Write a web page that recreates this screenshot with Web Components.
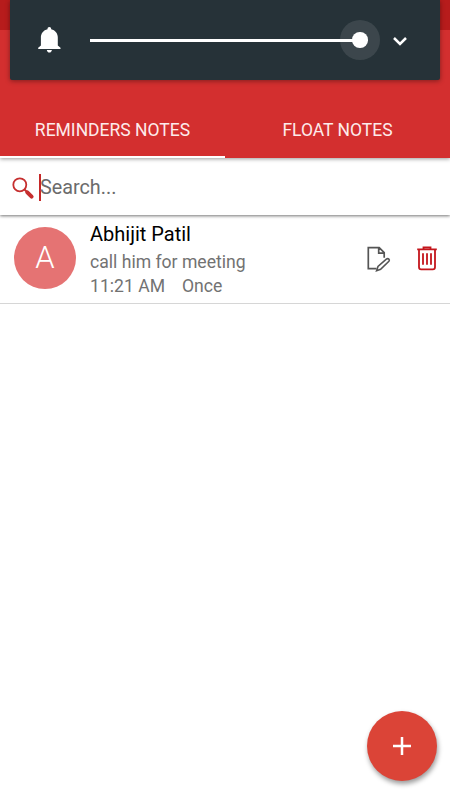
<!DOCTYPE html>
<html lang="en">
<head>
<meta charset="utf-8">
<meta name="viewport" content="width=device-width, initial-scale=1">
<title>Reminders Notes</title>
<style>
  html, body {
    margin: 0;
    height: 100%;
    overflow: hidden;
    background: #fff;
    font-family: Roboto, sans-serif;
  }
</style>
</head>
<body>
<notes-app>
  <volume-panel slot="overlay"></volume-panel>
  <app-header slot="header">
    <app-tab active>REMINDERS NOTES</app-tab>
    <app-tab>FLOAT NOTES</app-tab>
  </app-header>
  <search-bar>Search...</search-bar>
  <note-item>
    <span slot="initial">A</span>
    <span slot="title">Abhijit Patil</span>
    <span slot="text">call him for meeting</span>
    <span slot="time">11:21 AM</span>
    <span slot="repeat">Once</span>
  </note-item>
  <add-button slot="action"></add-button>
</notes-app>

<script>
class NotesApp extends HTMLElement {
  constructor() {
    super();
    this.attachShadow({ mode: "open" });
    this.shadowRoot.innerHTML = `
      <style>
        :host {
          display: flex;
          flex-direction: column;
          position: relative;
          height: 100vh;
          overflow: hidden;
          background: #fff;
        }
        main { flex: 1; }
        .overlay {
          position: absolute;
          top: 0;
          left: 10px;
          right: 10px;
          z-index: 5;
        }
        .action {
          position: absolute;
          right: 13px;
          bottom: 19px;
        }
      </style>
      <slot name="header"></slot>
      <main><slot></slot></main>
      <div class="overlay"><slot name="overlay"></slot></div>
      <div class="action"><slot name="action"></slot></div>
    `;
  }
}

class VolumePanel extends HTMLElement {
  constructor() {
    super();
    this.attachShadow({ mode: "open" });
    this.shadowRoot.innerHTML = `
      <style>
        :host {
          display: flex;
          align-items: center;
          height: 80px;
          box-sizing: border-box;
          padding: 0 30px 0 24px;
          background: #263238;
          border-radius: 0 0 2px 2px;
          box-shadow: 0 1px 5px rgba(0, 0, 0, 0.4);
        }
        svg { display: block; flex: none; }
        .slider {
          display: flex;
          align-items: center;
          flex: 1;
          margin: 0 10px 0 26px;
        }
        .track {
          flex: 1;
          height: 3px;
          background: #fff;
        }
        .thumb {
          display: grid;
          place-items: center;
          width: 40px;
          height: 40px;
          margin-left: -20px;
          border-radius: 50%;
          background: rgba(255, 255, 255, 0.1);
        }
        .thumb::before {
          content: "";
          width: 15.5px;
          height: 15.5px;
          border-radius: 50%;
          background: #fff;
        }
      </style>
      <svg width="30" height="30" viewBox="0 0 30 30" fill="#fff">
        <path d="M15.300 2c1.200 0 1.900.9 1.900 2.200 4 .9 6.600 4.200 6.600 8.300v7.900l2.700 2.300v1.400H4.200v-1.400l2.700-2.300v-7.900c0-4.100 2.600-7.400 6.600-8.300 0-1.300.7-2.200 1.800-2.200z"/>
        <path d="M12.800 25h5.100c-.1 1.500-1.200 2.600-2.500 2.600s-2.500-1.100-2.600-2.600z"/>
      </svg>
      <div class="slider"><div class="track"></div><div class="thumb"></div></div>
      <svg width="20" height="20" viewBox="0 0 20 20" fill="none" stroke="#fff" stroke-width="2.500">
        <path d="M4 8l6 6 6-6"/>
      </svg>
    `;
  }
}

class AppHeader extends HTMLElement {
  constructor() {
    super();
    this.attachShadow({ mode: "open" });
    this.shadowRoot.innerHTML = `
      <style>
        :host {
          display: block;
          position: relative;
          z-index: 2;
          background: #d32f2f;
          box-shadow: 0 1px 4px rgba(0, 0, 0, 0.4);
        }
        .status { height: 30px; background: #b71c1c; }
        .bar { height: 70px; }
        nav { display: flex; height: 58px; }
      </style>
      <div class="status"></div>
      <div class="bar"></div>
      <nav><slot></slot></nav>
    `;
  }
}

class AppTab extends HTMLElement {
  constructor() {
    super();
    this.attachShadow({ mode: "open" });
    this.shadowRoot.innerHTML = `
      <style>
        :host {
          display: flex;
          flex: 1;
          align-items: center;
          justify-content: center;
          box-sizing: border-box;
          padding-top: 4px;
          border-bottom: 2px solid transparent;
          color: #fdebeb;
          font-size: 17.5px;
          white-space: nowrap;
        }
        :host([active]) { border-bottom-color: #fff; }
      </style>
      <slot></slot>
    `;
  }
}

class SearchBar extends HTMLElement {
  constructor() {
    super();
    this.attachShadow({ mode: "open" });
    this.shadowRoot.innerHTML = `
      <style>
        :host {
          display: flex;
          align-items: center;
          position: relative;
          height: 57px;
          box-sizing: border-box;
          padding: 2px 0 0 11px;
          background: #fff;
          color: #6b6b6b;
          font-size: 19.8px;
          box-shadow: 0 1px 3px rgba(0, 0, 0, 0.55);
        }
        svg { display: block; }
        .caret {
          width: 2px;
          height: 27px;
          margin: 0 -1px 0 4px;
          background: #c62828;
        }
      </style>
      <svg width="24" height="24" viewBox="0 0 24 24" fill="none" stroke="#c62f2f">
        <circle cx="8.800" cy="8.800" r="6.500" stroke-width="1.800"/>
        <path d="M13.500 13.500l3 3" stroke-width="2"/>
        <path d="M16.300 16.300l4.300 4.300" stroke-width="4" stroke-linecap="round"/>
      </svg>
      <div class="caret"></div>
      <slot></slot>
    `;
  }
}

class NoteItem extends HTMLElement {
  constructor() {
    super();
    this.attachShadow({ mode: "open" });
    this.shadowRoot.innerHTML = `
      <style>
        :host {
          display: flex;
          align-items: flex-start;
          height: 89px;
          box-sizing: border-box;
          padding: 7px 12px 0 14px;
          border-bottom: 1px solid #d6d6d6;
          color: #727272;
          font-size: 17.6px;
          line-height: 24px;
          white-space: nowrap;
        }
        .avatar {
          display: grid;
          place-items: center;
          width: 62px;
          height: 62px;
          margin-top: 5px;
          border-radius: 50%;
          background: #e57373;
          color: #fff;
          font-size: 31px;
          font-weight: 300;
        }
        .body { flex: 1; margin-left: 14px; }
        .title { height: 28px; color: #000; font-size: 20px; }
        .when { display: flex; gap: 17px; }
        .actions { display: flex; gap: 25px; margin-top: 23px; }
        svg { display: block; }
      </style>
      <div class="avatar"><slot name="initial"></slot></div>
      <div class="body">
        <div class="title"><slot name="title"></slot></div>
        <div class="text"><slot name="text"></slot></div>
        <div class="when"><slot name="time"></slot><slot name="repeat"></slot></div>
      </div>
      <div class="actions">
        <svg width="26" height="28" viewBox="0 0 26 28" fill="none" stroke="#555" stroke-width="1.700">
          <path d="M11.500 23.700H3.300V2.700h10.900l5 5v5M13.700 3v5.200h5.300"/>
          <path d="M11.600 25.700l1.400-4.200 8.600-7.500c1.700-1.100 3.500.7 2.300 2.300l-8.300 8z" stroke-width="1.600"/>
        </svg>
        <svg width="22" height="28" viewBox="0 0 22 28" fill="none" stroke="#c4161c" stroke-width="1.800">
          <path d="M1.200 4.400h19.600M7.500 4V2.400h7V4M3 4.800V22c0 1.500.8 2.400 2.200 2.400h11.600c1.400 0 2.200-.9 2.200-2.400V4.800"/>
          <path d="M7 8.300v11.400M11 8.300v11.400M15 8.300v11.400"/>
        </svg>
      </div>
    `;
  }
}

class AddButton extends HTMLElement {
  constructor() {
    super();
    this.attachShadow({ mode: "open" });
    this.shadowRoot.innerHTML = `
      <style>
        :host {
          display: grid;
          place-items: center;
          width: 70px;
          height: 70px;
          border-radius: 50%;
          background: #db4437;
          box-shadow: 1px 3px 5px rgba(0, 0, 0, 0.4);
        }
        svg { display: block; }
      </style>
      <svg width="18" height="18" viewBox="0 0 18 18" stroke="#fff" stroke-width="2.500">
        <path d="M9 0v18M0 9h18"/>
      </svg>
    `;
  }
}

customElements.define("notes-app", NotesApp);
customElements.define("volume-panel", VolumePanel);
customElements.define("app-header", AppHeader);
customElements.define("app-tab", AppTab);
customElements.define("search-bar", SearchBar);
customElements.define("note-item", NoteItem);
customElements.define("add-button", AddButton);
</script>
</body>
</html>
